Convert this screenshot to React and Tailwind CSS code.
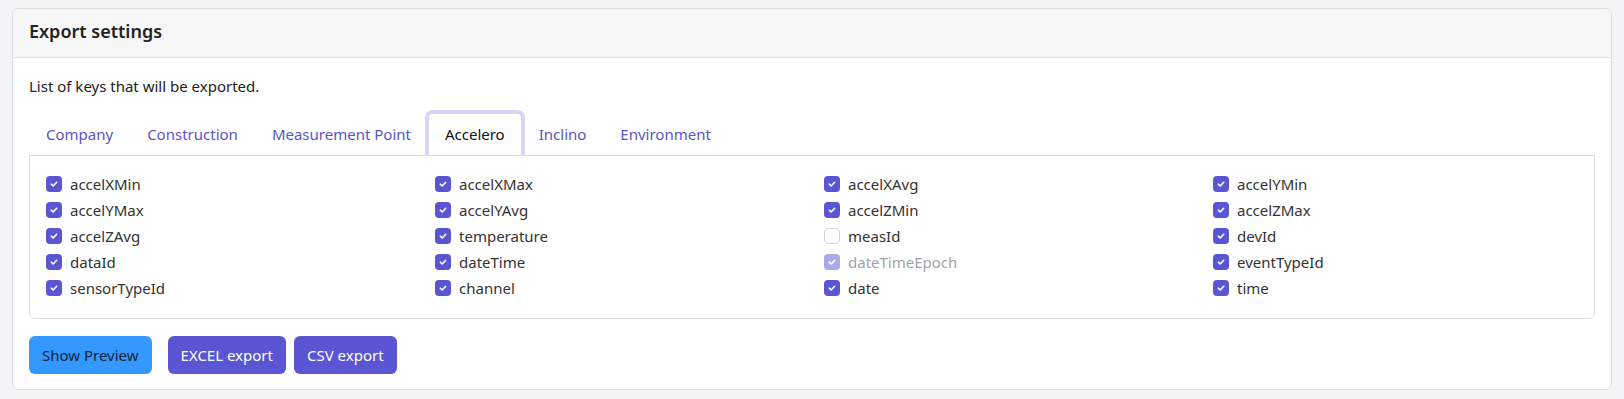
import React, { useState } from "react";

const TABS = ["Company", "Construction", "Measurement Point", "Accelero", "Inclino", "Environment"];

const KEYS = [
  { name: "accelXMin", checked: true },
  { name: "accelXMax", checked: true },
  { name: "accelXAvg", checked: true },
  { name: "accelYMin", checked: true },
  { name: "accelYMax", checked: true },
  { name: "accelYAvg", checked: true },
  { name: "accelZMin", checked: true },
  { name: "accelZMax", checked: true },
  { name: "accelZAvg", checked: true },
  { name: "temperature", checked: true },
  { name: "measId", checked: false },
  { name: "devId", checked: true },
  { name: "dataId", checked: true },
  { name: "dateTime", checked: true },
  { name: "dateTimeEpoch", checked: true, disabled: true },
  { name: "eventTypeId", checked: true },
  { name: "sensorTypeId", checked: true },
  { name: "channel", checked: true },
  { name: "date", checked: true },
  { name: "time", checked: true },
];

function Check({ checked, disabled }) {
  if (!checked) {
    return <span className="w-4 h-4 shrink-0 rounded-[4px] border border-[#d4d4d8] bg-white" />;
  }
  return (
    <span
      className={`w-4 h-4 shrink-0 rounded-[4px] flex items-center justify-center ${
        disabled ? "bg-[#adaae9]" : "bg-[#5a55d2]"
      }`}
    >
      <svg width="10" height="10" viewBox="0 0 10 10" fill="none">
        <path d="M2.3 5.2 4.2 7 7.7 3.3" stroke="white" strokeWidth="1.6" strokeLinecap="round" strokeLinejoin="round" />
      </svg>
    </span>
  );
}

export default function App() {
  const [tab, setTab] = useState("Accelero");

  return (
    <div className="min-h-screen bg-[#f3f4f6] px-3 pt-2 pb-2.5 font-['Noto_Sans',sans-serif]">
      <div className="bg-white border border-[#dcdcdc] rounded-md overflow-hidden">
        <div className="h-[49px] bg-[#f7f7f7] border-b border-[#dcdcdc] px-4 pb-1 flex items-center">
          <h2 className="text-[18px] font-semibold text-[#222]">Export settings</h2>
        </div>

        <div className="px-4 pt-[16px] pb-[15px]">
          <p className="text-[15px] leading-6 text-[#222] mb-3">List of keys that will be exported.</p>

          <div className="flex">
            {TABS.map((t) =>
              t === tab ? (
                <button
                  key={t}
                  className="relative z-10 -mx-[3px] -mb-px h-[45px] px-4 border-4 border-b-0 border-[#d6d5f4] rounded-t-lg bg-white text-[15px] text-[#111]"
                >
                  {t}
                </button>
              ) : (
                <button
                  key={t}
                  onClick={() => setTab(t)}
                  className="h-[45px] px-[17px] pt-1 text-[15px] text-[#5a55c4]"
                >
                  {t}
                </button>
              )
            )}
          </div>

          <div className="border border-[#dcdcdc] rounded-b-md px-4 pt-[16px] pb-[18px]">
            <div className="grid grid-cols-4 gap-x-6 gap-y-0.5">
              {KEYS.map((k) => (
                <label key={k.name} className="h-6 flex items-center gap-2">
                  <Check checked={k.checked} disabled={k.disabled} />
                  <span className={`text-[15px] ${k.disabled ? "text-[#a3a3a3]" : "text-[#333]"}`}>{k.name}</span>
                </label>
              ))}
            </div>
          </div>

          <div className="flex items-center mt-[17px]">
            <button className="h-[38px] px-[13px] rounded-md bg-[#3399ff] text-[15px] text-[#10243a]">Show Preview</button>
            <button className="ml-4 h-[38px] px-[13px] rounded-md bg-[#5a55d2] text-[15px] text-white">EXCEL export</button>
            <button className="ml-2 h-[38px] px-[13px] rounded-md bg-[#5a55d2] text-[15px] text-white">CSV export</button>
          </div>
        </div>
      </div>
    </div>
  );
}
